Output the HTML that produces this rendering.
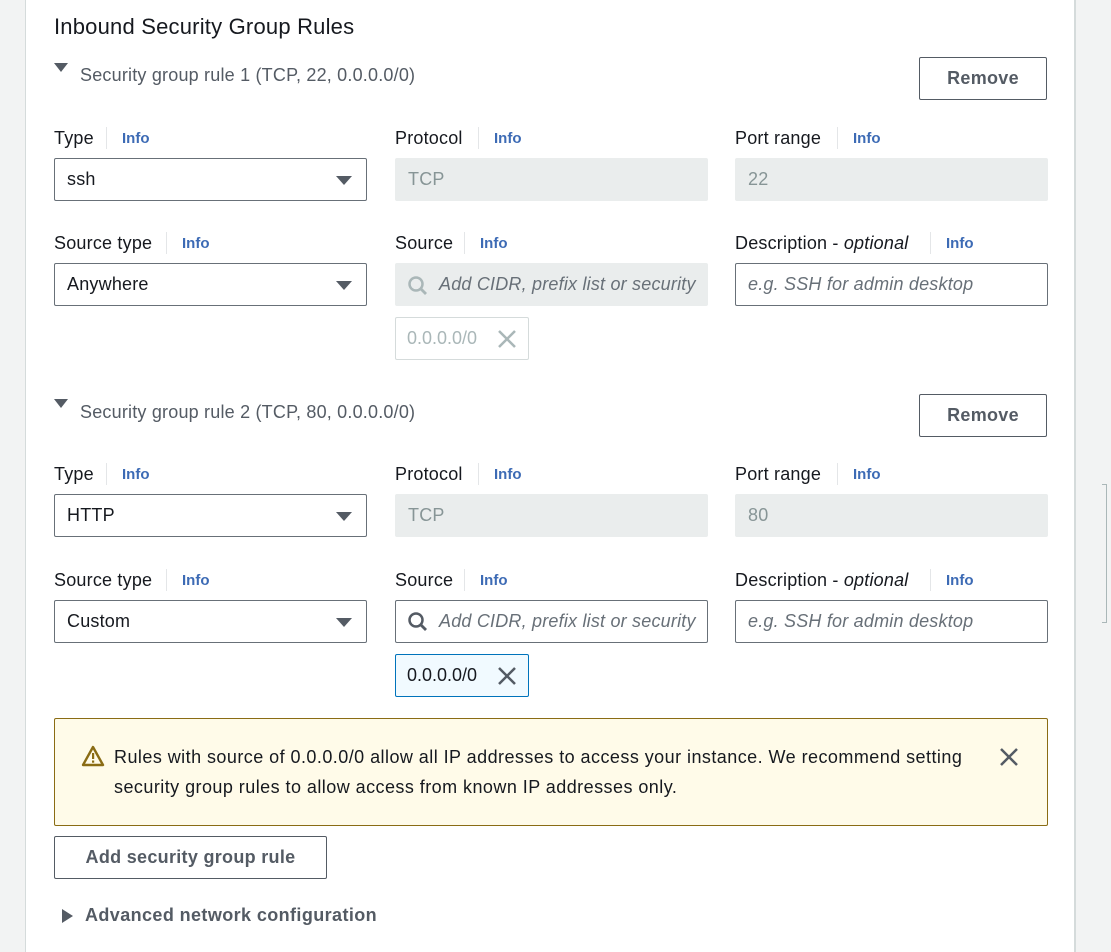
<!DOCTYPE html>
<html><head><meta charset="utf-8"><style>
*{box-sizing:border-box;margin:0;padding:0}
body{width:1111px;height:952px;position:relative;background:#fff;font-family:"Liberation Sans",sans-serif;color:#16191f;overflow:hidden}
.a{position:absolute}
.lbl{position:absolute;font-size:18px;line-height:22px;white-space:nowrap;letter-spacing:0.2px}
.info{position:absolute;font-size:15px;font-weight:bold;color:#3d6bb5;line-height:22px}
.sep{position:absolute;width:1px;height:22px;background:#e4e6e8}
.inp{position:absolute;height:43px;border:1px solid #687078;border-radius:2px;font-size:18px;line-height:41px;padding-left:12px;white-space:nowrap;overflow:hidden;letter-spacing:0.2px}
.dis{background:#eaeded;border-color:#eaeded;color:#879596}
.ph{font-style:italic;color:#687078}
.car{position:absolute;right:14px;top:17px;width:0;height:0;border-left:8px solid transparent;border-right:8px solid transparent;border-top:9px solid #545b64}
.hdr{position:absolute;font-size:18px;color:#545b64;white-space:nowrap;letter-spacing:0.2px}
.tri{position:absolute;width:0;height:0;border-left:7px solid transparent;border-right:7px solid transparent;border-top:9px solid #545b64}
.btn{position:absolute;border:1px solid #545b64;border-radius:2px;font-size:18px;font-weight:bold;color:#545b64;text-align:center;background:#fff;letter-spacing:0.3px}
.tok{position:absolute;width:134px;height:43px;border:1px solid #d5dbdb;border-radius:2px;font-size:18px;line-height:41px;padding-left:11px}
</style></head><body>
<div class="a" style="left:0;top:0;width:26px;height:952px;background:#f2f3f3;border-right:1px solid #d5dbdb"></div>
<div class="a" style="left:1074px;top:0;width:37px;height:952px;background:#f2f3f3;border-left:2px solid #d5dbdb"></div>
<div class="a" style="left:1106px;top:484px;width:1px;height:139px;background:#aab7b8"></div>
<div class="a" style="left:1102px;top:484px;width:5px;height:1px;background:#aab7b8"></div>
<div class="a" style="left:1102px;top:622px;width:5px;height:1px;background:#aab7b8"></div>

<div class="lbl" style="left:54px;top:14px;font-size:22px;line-height:26px">Inbound Security Group Rules</div>

<!-- Rule 1 -->
<div class="tri" style="left:54px;top:63px"></div>
<div class="hdr" style="left:80px;top:65px">Security group rule 1 (TCP, 22, 0.0.0.0/0)</div>
<div class="btn" style="left:919px;top:57px;width:128px;height:43px;line-height:41px">Remove</div>

<div class="lbl" style="left:54px;top:127px">Type</div><div class="sep" style="left:106px;top:127px"></div><div class="info" style="left:122px;top:128px">Info</div>
<div class="lbl" style="left:395px;top:127px">Protocol</div><div class="sep" style="left:478px;top:127px"></div><div class="info" style="left:494px;top:128px">Info</div>
<div class="lbl" style="left:735px;top:127px">Port range</div><div class="sep" style="left:837px;top:127px"></div><div class="info" style="left:853px;top:128px">Info</div>
<div class="inp" style="left:54px;top:158px;width:313px">ssh<div class="car"></div></div>
<div class="inp dis" style="left:395px;top:158px;width:313px">TCP</div>
<div class="inp dis" style="left:735px;top:158px;width:313px">22</div>

<div class="lbl" style="left:54px;top:232px">Source type</div><div class="sep" style="left:166px;top:232px"></div><div class="info" style="left:182px;top:233px">Info</div>
<div class="lbl" style="left:395px;top:232px">Source</div><div class="sep" style="left:464px;top:232px"></div><div class="info" style="left:480px;top:233px">Info</div>
<div class="lbl" style="left:735px;top:232px">Description - <i>optional</i></div><div class="sep" style="left:930px;top:232px"></div><div class="info" style="left:946px;top:233px">Info</div>
<div class="inp" style="left:54px;top:263px;width:313px">Anywhere<div class="car"></div></div>
<div class="inp dis" style="left:395px;top:263px;width:313px;padding-left:43px"><svg class="a" style="left:11px;top:11px" width="22" height="22" viewBox="0 0 22 22"><circle cx="9" cy="9" r="6.5" fill="none" stroke="#aab7b8" stroke-width="2.5"/><line x1="13.5" y1="13.5" x2="19" y2="19" stroke="#aab7b8" stroke-width="2.8"/></svg><span class="ph">Add CIDR, prefix list or security</span></div>
<div class="inp" style="left:735px;top:263px;width:313px"><span class="ph">e.g. SSH for admin desktop</span></div>
<div class="tok" style="left:395px;top:317px;color:#aab7b8">0.0.0.0/0<svg class="a" style="left:101px;top:11px" width="20" height="20" viewBox="0 0 20 20"><path d="M2 2L18 18M18 2L2 18" stroke="#aab7b8" stroke-width="2.5"/></svg></div>

<!-- Rule 2 -->
<div class="tri" style="left:54px;top:399px"></div>
<div class="hdr" style="left:80px;top:402px">Security group rule 2 (TCP, 80, 0.0.0.0/0)</div>
<div class="btn" style="left:919px;top:394px;width:128px;height:43px;line-height:41px">Remove</div>

<div class="lbl" style="left:54px;top:463px">Type</div><div class="sep" style="left:106px;top:463px"></div><div class="info" style="left:122px;top:464px">Info</div>
<div class="lbl" style="left:395px;top:463px">Protocol</div><div class="sep" style="left:478px;top:463px"></div><div class="info" style="left:494px;top:464px">Info</div>
<div class="lbl" style="left:735px;top:463px">Port range</div><div class="sep" style="left:837px;top:463px"></div><div class="info" style="left:853px;top:464px">Info</div>
<div class="inp" style="left:54px;top:494px;width:313px">HTTP<div class="car"></div></div>
<div class="inp dis" style="left:395px;top:494px;width:313px">TCP</div>
<div class="inp dis" style="left:735px;top:494px;width:313px">80</div>

<div class="lbl" style="left:54px;top:569px">Source type</div><div class="sep" style="left:166px;top:569px"></div><div class="info" style="left:182px;top:570px">Info</div>
<div class="lbl" style="left:395px;top:569px">Source</div><div class="sep" style="left:464px;top:569px"></div><div class="info" style="left:480px;top:570px">Info</div>
<div class="lbl" style="left:735px;top:569px">Description - <i>optional</i></div><div class="sep" style="left:930px;top:569px"></div><div class="info" style="left:946px;top:570px">Info</div>
<div class="inp" style="left:54px;top:600px;width:313px">Custom<div class="car"></div></div>
<div class="inp" style="left:395px;top:600px;width:313px;padding-left:43px"><svg class="a" style="left:11px;top:10px" width="22" height="22" viewBox="0 0 22 22"><circle cx="9" cy="9" r="6.5" fill="none" stroke="#545b64" stroke-width="2.5"/><line x1="13.5" y1="13.5" x2="19" y2="19" stroke="#545b64" stroke-width="2.8"/></svg><span class="ph">Add CIDR, prefix list or security</span></div>
<div class="inp" style="left:735px;top:600px;width:313px"><span class="ph">e.g. SSH for admin desktop</span></div>
<div class="tok" style="left:395px;top:654px;background:#f1faff;border-color:#0073bb;color:#16191f">0.0.0.0/0<svg class="a" style="left:101px;top:11px" width="20" height="20" viewBox="0 0 20 20"><path d="M2 2L18 18M18 2L2 18" stroke="#545b64" stroke-width="2.5"/></svg></div>

<!-- Alert -->
<div class="a" style="left:54px;top:718px;width:994px;height:108px;background:#fffbe9;border:1px solid #8a6c14;border-radius:2px"></div>
<svg class="a" style="left:81px;top:745px" width="24" height="22" viewBox="0 0 24 22"><path d="M12 2L22 20H2Z" fill="none" stroke="#8a6c14" stroke-width="2.4" stroke-linejoin="round"/><rect x="11" y="8" width="2.2" height="6" fill="#8a6c14"/><rect x="11" y="15.5" width="2.2" height="2.2" fill="#8a6c14"/></svg>
<div class="a" style="left:114px;top:742px;font-size:18px;line-height:30px;width:870px;letter-spacing:0.45px">Rules with source of 0.0.0.0/0 allow all IP addresses to access your instance. We recommend setting security group rules to allow access from known IP addresses only.</div>
<svg class="a" style="left:999px;top:747px" width="20" height="20" viewBox="0 0 20 20"><path d="M2 2L18 18M18 2L2 18" stroke="#545b64" stroke-width="2.5"/></svg>

<div class="btn" style="left:54px;top:836px;width:273px;height:43px;line-height:41px">Add security group rule</div>

<div class="a" style="left:62px;top:909px;width:0;height:0;border-top:7px solid transparent;border-bottom:7px solid transparent;border-left:11px solid #545b64"></div>
<div class="lbl" style="left:85px;top:904px;font-weight:bold;color:#545b64;letter-spacing:0.4px">Advanced network configuration</div>
</body></html>
